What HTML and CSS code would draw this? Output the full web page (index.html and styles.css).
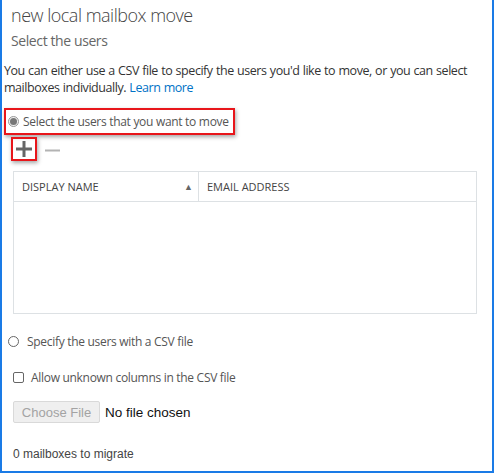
FILE: index.html
```html
<!DOCTYPE html>
<html lang="en">
<head>
  <meta charset="UTF-8" />
  <title>new local mailbox move</title>
  <link rel="stylesheet" href="styles.css">
</head>
<body>
  <div class="frame">
    <h1 class="title">new local mailbox move</h1>
    <h2 class="subtitle">Select the users</h2>

    <div class="intro">
      <div>You can either use a CSV file to specify the users you'd like to move, or you can select</div>
      <div>mailboxes individually. <a href="#">Learn more</a></div>
    </div>

    <div class="highlight pick-row">
      <span class="radio checked"></span>
      <span>Select the users that you want to move</span>
    </div>

    <div class="toolbar">
      <span class="highlight add-btn">
        <svg width="18" height="18" viewBox="0 0 18 18"><path d="M9 1v16M1 9h16" stroke="#666" stroke-width="3"/></svg>
      </span>
      <svg class="remove-btn" width="15" height="15" viewBox="0 0 15 15"><path d="M0 7.5h15" stroke="#b3b3b3" stroke-width="2"/></svg>
    </div>

    <div class="grid">
      <div class="grid-head">
        <div class="col col-name">DISPLAY NAME <span class="sort">&#9650;</span></div>
        <div class="col">EMAIL ADDRESS</div>
      </div>
      <div class="grid-body"></div>
    </div>

    <div class="csv-row">
      <span class="radio"></span>
      <span>Specify the users with a CSV file</span>
    </div>

    <div class="check-row">
      <span class="checkbox"></span>
      <span>Allow unknown columns in the CSV file</span>
    </div>

    <div class="file-row">
      <span class="file-btn">Choose File</span>
      <span class="file-name">No file chosen</span>
    </div>

    <div class="count">0 mailboxes to migrate</div>
  </div>
</body>
</html>
```

FILE: styles.css
```css
body {
  margin: 0;
  background: #fff;
  font-family: 'Open Sans', 'Noto Sans', sans-serif;
  color: #333;
}
.frame {
  box-sizing: border-box;
  width: 494px;
  height: 473px;
  border: 2px solid #1a7be6;
  border-top: none;
  overflow: hidden;
}
.title {
  margin: 0;
  padding: 2px 0 0 9px;
  font-size: 18px;
  font-weight: 300;
  letter-spacing: -0.5px;
  color: #444;
  line-height: 26px;
}
.subtitle {
  margin: 0;
  padding: 3px 0 0 9px;
  font-size: 14px;
  font-weight: 400;
  letter-spacing: -0.4px;
  color: #666;
  line-height: 20px;
}
.intro {
  margin: 11px 0 0 2px;
  font-size: 12.5px;
  letter-spacing: -0.45px;
  word-spacing: 0.5px;
  line-height: 17px;
  color: #333;
  white-space: nowrap;
}
.intro a {
  color: #0072c6;
  text-decoration: none;
}
.highlight {
  border: 2px solid #e8161b;
  box-shadow: 1px 2px 4px rgba(0, 0, 0, 0.35);
}
.pick-row {
  display: inline-flex;
  align-items: center;
  gap: 4px;
  margin: 12px 0 0 2px;
  padding: 3px 4px 3px 2px;
  font-size: 12px;
  letter-spacing: -0.3px;
  color: #555;
}
.radio {
  box-sizing: border-box;
  width: 11px;
  height: 11px;
  border: 1px solid #666;
  border-radius: 50%;
  background: #fff;
  position: relative;
}
.radio.checked {
  border-color: #999;
  background: #f0f0f0;
}
.radio.checked::after {
  content: "";
  position: absolute;
  left: 1px;
  top: 1px;
  width: 7px;
  height: 7px;
  border-radius: 50%;
  background: #777;
}
.toolbar {
  display: flex;
  align-items: center;
  gap: 8px;
  margin: 2px 0 0 9px;
}
.add-btn {
  display: flex;
  padding: 1px 2px;
}
.remove-btn {
  margin-top: 2px;
}
.grid {
  margin: 10px 15px 0 11px;
  border: 1px solid #dde1e4;
}
.grid-head {
  display: grid;
  grid-template-columns: 185px 1fr;
  height: 29px;
  border-bottom: 1px solid #dde1e4;
  font-size: 11px;
  color: #444;
}
.col {
  display: flex;
  align-items: center;
  padding-left: 8px;
}
.col-name {
  border-right: 1px solid #dde1e4;
  justify-content: space-between;
  padding-right: 5px;
}
.sort {
  font-size: 9px;
  color: #666;
}
.grid-body {
  height: 111px;
}
.csv-row,
.check-row {
  display: flex;
  align-items: center;
  font-size: 12px;
  letter-spacing: -0.3px;
  color: #555;
}
.csv-row {
  gap: 8px;
  margin: 19px 0 0 6px;
}
.check-row {
  gap: 7px;
  margin: 19px 0 0 11px;
}
.checkbox {
  box-sizing: border-box;
  width: 11px;
  height: 11px;
  border: 1px solid #666;
  border-radius: 2px;
}
.file-row {
  display: flex;
  align-items: center;
  gap: 5px;
  margin: 15px 0 0 11px;
  font-family: 'Liberation Sans', Arial, sans-serif;
}
.file-btn {
  box-sizing: border-box;
  width: 87px;
  height: 22px;
  display: flex;
  align-items: center;
  justify-content: center;
  border: 1px solid #d9d9d9;
  border-radius: 2px;
  background: #efefef;
  color: #a3a3a3;
  font-size: 13px;
}
.file-name {
  font-size: 13.5px;
  color: #111;
}
.count {
  margin: 24px 0 0 11px;
  font-family: 'Liberation Sans', Arial, sans-serif;
  font-size: 12px;
  color: #444;
}
```
